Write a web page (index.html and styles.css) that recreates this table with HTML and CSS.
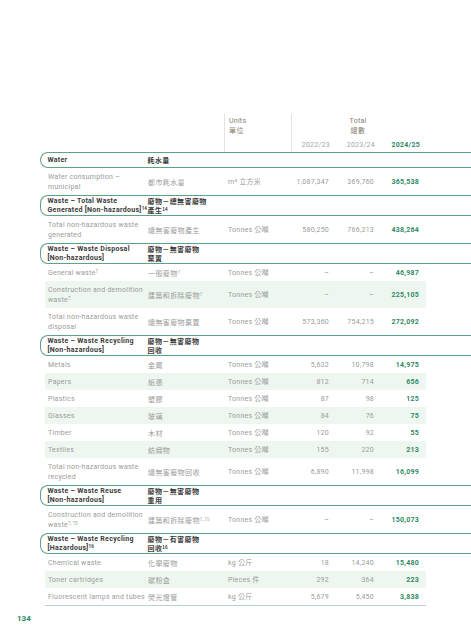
FILE: index.html
```html
<!DOCTYPE html>
<html lang="zh-Hant">
<head>
<meta charset="utf-8">
<title>Environmental data</title>
<link rel="stylesheet" href="styles.css">
</head>
<body>
<div class="page">
  <div class="table">
    <div class="head">
      <div class="h-units"><div>Units</div><div class="zh">單位</div></div>
      <div class="h-total">
        <div class="h-title"><div>Total</div><div class="zh">總數</div></div>
        <div class="years"><span>2022/23</span><span>2023/24</span><span class="cur">2024/25</span></div>
      </div>
    </div>

    <div class="sec sec1"><div class="en">Water</div><div class="zh">耗水量</div></div>
    <div class="row"><div class="en">Water consumption –<br>municipal</div><div class="zh">都市耗水量</div><div class="u">m³ 立方米</div><div class="n">1,087,347</div><div class="n">369,760</div><div class="n cur">365,538</div></div>

    <div class="sec"><div class="en">Waste – Total Waste<br>Generated [Non-hazardous]<sup>14</sup></div><div class="zh">廢物－總無害廢物<br>產生<sup>14</sup></div></div>
    <div class="row"><div class="en">Total non-hazardous waste<br>generated</div><div class="zh">總無害廢物產生</div><div class="u">Tonnes 公噸</div><div class="n">580,250</div><div class="n">766,213</div><div class="n cur">438,264</div></div>

    <div class="sec"><div class="en">Waste – Waste Disposal<br>[Non-hazardous]</div><div class="zh">廢物－無害廢物<br>棄置</div></div>
    <div class="row"><div class="en">General waste<sup>7</sup></div><div class="zh">一般廢物<sup>7</sup></div><div class="u">Tonnes 公噸</div><div class="n">–</div><div class="n">–</div><div class="n cur">46,987</div></div>
    <div class="row alt"><div class="en">Construction and demolition<br>waste<sup>7</sup></div><div class="zh">建築和拆除廢物<sup>7</sup></div><div class="u">Tonnes 公噸</div><div class="n">–</div><div class="n">–</div><div class="n cur">225,105</div></div>
    <div class="row"><div class="en">Total non-hazardous waste<br>disposal</div><div class="zh">總無害廢物棄置</div><div class="u">Tonnes 公噸</div><div class="n">573,360</div><div class="n">754,215</div><div class="n cur">272,092</div></div>

    <div class="sec"><div class="en">Waste – Waste Recycling<br>[Non-hazardous]</div><div class="zh">廢物－無害廢物<br>回收</div></div>
    <div class="row"><div class="en">Metals</div><div class="zh">金屬</div><div class="u">Tonnes 公噸</div><div class="n">5,632</div><div class="n">10,798</div><div class="n cur">14,975</div></div>
    <div class="row alt"><div class="en">Papers</div><div class="zh">紙張</div><div class="u">Tonnes 公噸</div><div class="n">812</div><div class="n">714</div><div class="n cur">656</div></div>
    <div class="row"><div class="en">Plastics</div><div class="zh">塑膠</div><div class="u">Tonnes 公噸</div><div class="n">87</div><div class="n">98</div><div class="n cur">125</div></div>
    <div class="row alt"><div class="en">Glasses</div><div class="zh">玻璃</div><div class="u">Tonnes 公噸</div><div class="n">84</div><div class="n">76</div><div class="n cur">75</div></div>
    <div class="row"><div class="en">Timber</div><div class="zh">木材</div><div class="u">Tonnes 公噸</div><div class="n">120</div><div class="n">92</div><div class="n cur">55</div></div>
    <div class="row alt"><div class="en">Textiles</div><div class="zh">紡織物</div><div class="u">Tonnes 公噸</div><div class="n">155</div><div class="n">220</div><div class="n cur">213</div></div>
    <div class="row"><div class="en">Total non-hazardous waste<br>recycled</div><div class="zh">總無害廢物回收</div><div class="u">Tonnes 公噸</div><div class="n">6,890</div><div class="n">11,998</div><div class="n cur">16,099</div></div>

    <div class="sec"><div class="en">Waste – Waste Reuse<br>[Non-hazardous]</div><div class="zh">廢物－無害廢物<br>重用</div></div>
    <div class="row"><div class="en">Construction and demolition<br>waste<sup>7, 15</sup></div><div class="zh">建築和拆除廢物<sup>7, 15</sup></div><div class="u">Tonnes 公噸</div><div class="n">–</div><div class="n">–</div><div class="n cur">150,073</div></div>

    <div class="sec"><div class="en">Waste – Waste Recycling<br>[Hazardous]<sup>16</sup></div><div class="zh">廢物－有害廢物<br>回收<sup>16</sup></div></div>
    <div class="row"><div class="en">Chemical waste</div><div class="zh">化學廢物</div><div class="u">kg 公斤</div><div class="n">18</div><div class="n">14,240</div><div class="n cur">15,480</div></div>
    <div class="row alt"><div class="en">Toner cartridges</div><div class="zh">碳粉盒</div><div class="u">Pieces 件</div><div class="n">292</div><div class="n">364</div><div class="n cur">223</div></div>
    <div class="row last"><div class="en">Fluorescent lamps and tubes</div><div class="zh">熒光燈管</div><div class="u">kg 公斤</div><div class="n">5,679</div><div class="n">5,450</div><div class="n cur">3,838</div></div>
  </div>
  <div class="pageno">134</div>
</div>
</body>
</html>
```
FILE: styles.css
```css
html, body {
  margin: 0;
  padding: 0;
  background: #ffffff;
  overflow: hidden;
}
.page {
  width: 471px;
  height: 640px;
  font-family: Roboto, "Noto Sans CJK TC", sans-serif;
  font-size: 7px;
  color: #9b9b9b;
  letter-spacing: 0.25px;
}
.zh {
  font-family: "Noto Sans CJK TC", sans-serif;
  letter-spacing: 0.4px;
}
sup {
  font-size: 4.5px;
  vertical-align: 2.5px;
  line-height: 0;
  letter-spacing: 0;
}
.table {
  margin-left: 45px;
  width: 381px;
  padding-top: 114px;
}
.head {
  display: flex;
  padding-left: 179px;
  height: 38px;
}
.h-units {
  width: 62px;
  border-left: 1px solid #e2e2e2;
  padding: 3px 0 0 4px;
  line-height: 9px;
  color: #857d70;
}
.h-total {
  flex: 1;
  border-left: 1px solid #e2e2e2;
  display: flex;
  flex-direction: column;
  justify-content: space-between;
}
.h-title {
  text-align: center;
  padding-top: 3px;
  padding-right: 2px;
  line-height: 9px;
  color: #857d70;
}
.years {
  display: grid;
  grid-template-columns: 38px 45px 45px;
  text-align: right;
  line-height: 10px;
  padding-bottom: 2px;
  color: #a5a5a5;
}
.years .cur {
  color: #2f8a66;
  font-weight: 700;
}
.sec {
  display: grid;
  grid-template-columns: 100px 80px 1fr;
  align-items: center;
  margin-left: -5px;
  margin-right: -45px;
  border: 1.5px solid #5fa189;
  border-right: none;
  border-radius: 8px 0 0 8px;
  padding: 0.5px 0 0.5px 6.5px;
  min-height: 13px;
  line-height: 9px;
  color: #3b3b3b;
  font-weight: 700;
  letter-spacing: 0.3px;
}
.row {
  display: grid;
  grid-template-columns: 100px 80px 56px 45px 45px 45px;
  align-items: center;
  padding: 3.5px 7px 3.5px 3px;
  line-height: 10px;
}
.row.alt {
  background: #eef6f0;
}
.row.last {
  border-bottom: 1px solid #b7d2c4;
}
.n {
  text-align: right;
}
.n.cur {
  color: #2f8a66;
  font-weight: 700;
}
.pageno {
  margin: 8px 0 0 17px;
  font-size: 8px;
  line-height: 10px;
  font-weight: 700;
  color: #2f8a66;
  letter-spacing: 0;
}
```
